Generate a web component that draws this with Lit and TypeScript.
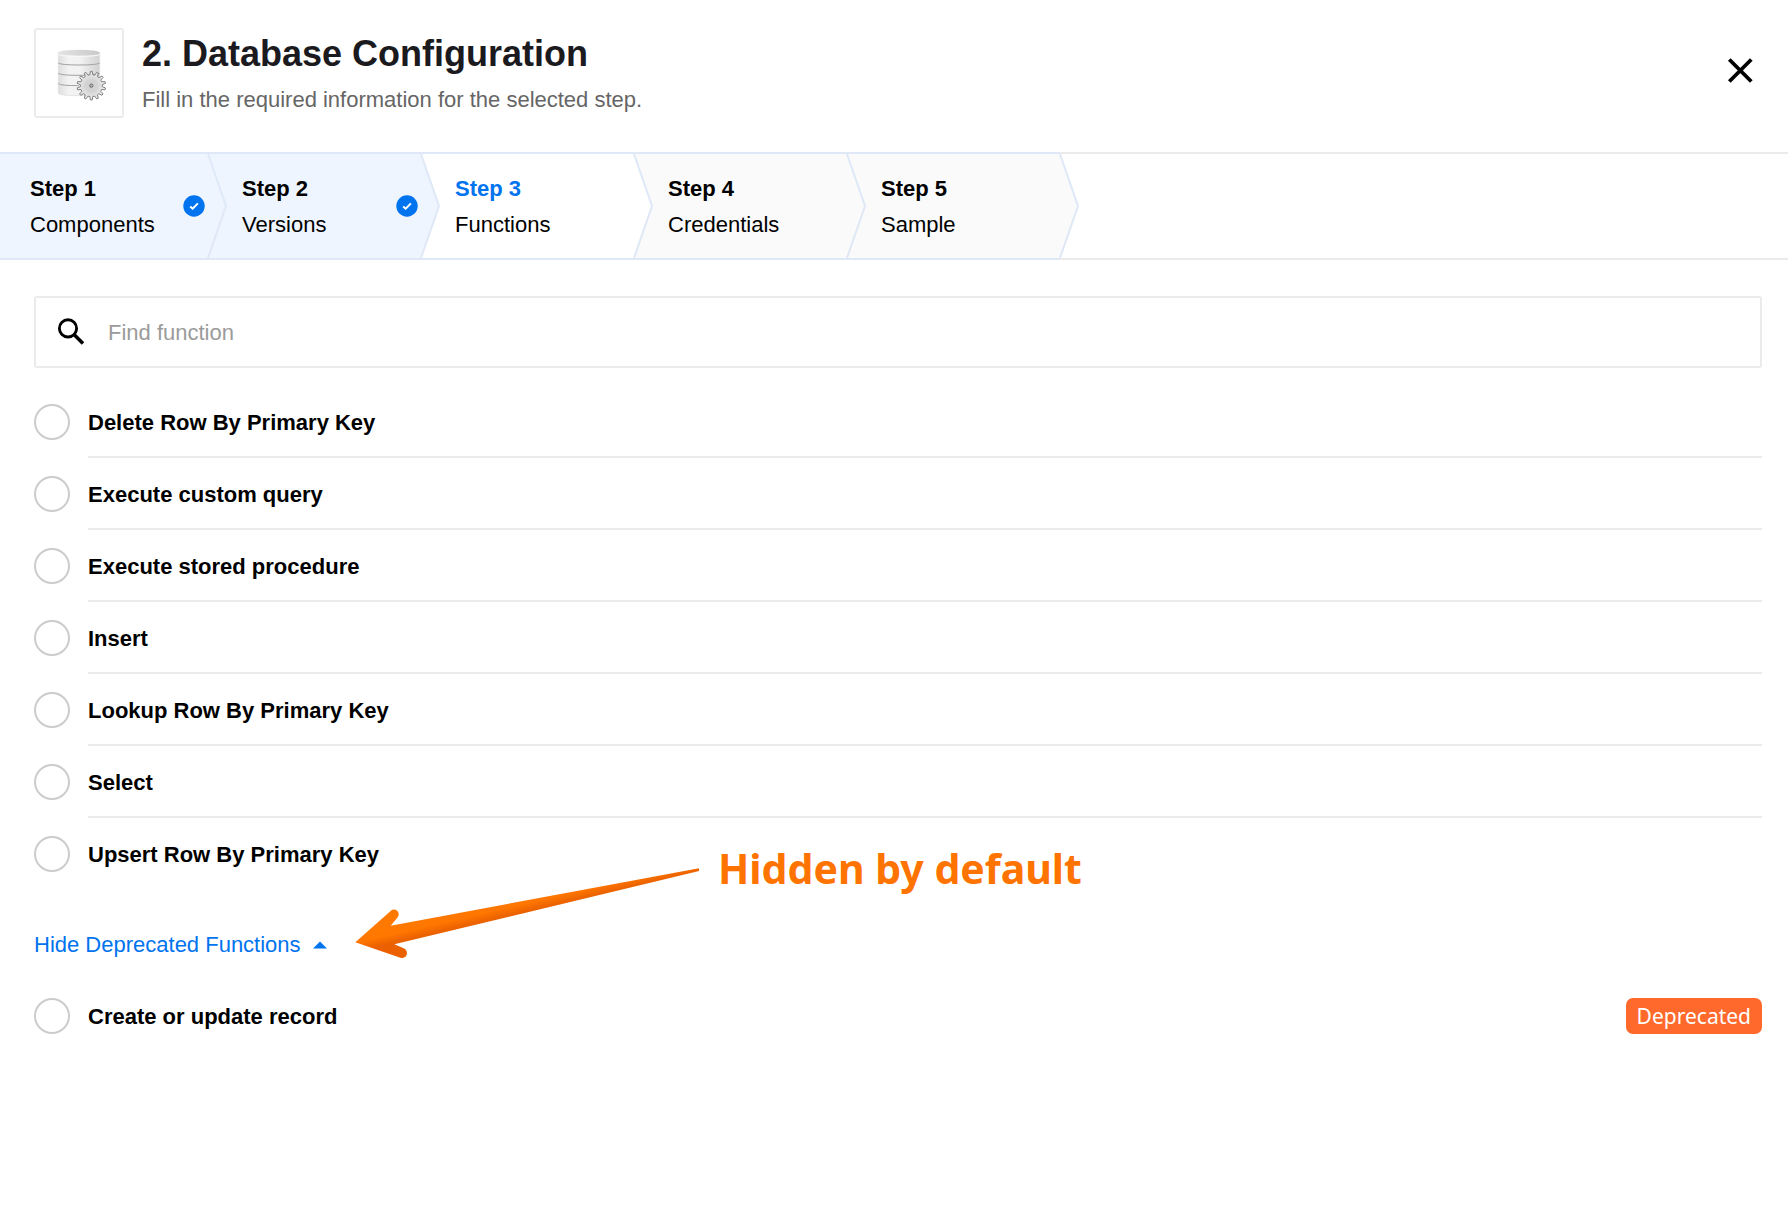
import { LitElement, html, css, svg, nothing } from "lit";
import { customElement, property, state } from "lit/decorators.js";
import { classMap } from "lit/directives/class-map.js";

type StepState = "done" | "current" | "pending";

interface Step {
  title: string;
  label: string;
  state: StepState;
}

interface Fn {
  id: string;
  name: string;
  deprecated?: boolean;
}

const STEPS: Step[] = [
  { title: "Step 1", label: "Components", state: "done" },
  { title: "Step 2", label: "Versions", state: "done" },
  { title: "Step 3", label: "Functions", state: "current" },
  { title: "Step 4", label: "Credentials", state: "pending" },
  { title: "Step 5", label: "Sample", state: "pending" },
];

const FUNCTIONS: Fn[] = [
  { id: "delete-row", name: "Delete Row By Primary Key" },
  { id: "custom-query", name: "Execute custom query" },
  { id: "stored-procedure", name: "Execute stored procedure" },
  { id: "insert", name: "Insert" },
  { id: "lookup-row", name: "Lookup Row By Primary Key" },
  { id: "select", name: "Select" },
  { id: "upsert-row", name: "Upsert Row By Primary Key" },
];

const DEPRECATED: Fn[] = [
  { id: "create-or-update", name: "Create or update record", deprecated: true },
];

/** Outline of a cog with the given number of teeth, centred on (cx, cy). */
function gearPath(cx: number, cy: number, outer: number, inner: number, teeth: number): string {
  const pitch = (Math.PI * 2) / teeth;
  const at = (r: number, a: number) =>
    `${(cx + r * Math.cos(a)).toFixed(1)} ${(cy + r * Math.sin(a)).toFixed(1)}`;
  let d = "";
  for (let i = 0; i < teeth; i++) {
    const a = i * pitch - Math.PI / 2;
    d += `${i === 0 ? "M" : "L"}${at(inner, a - pitch * 0.3)}`;
    d += `L${at(outer, a - pitch * 0.14)}L${at(outer, a + pitch * 0.14)}`;
    d += `L${at(inner, a + pitch * 0.3)}`;
  }
  return d + "Z";
}

const databaseIcon = html`
  <svg class="logo" viewBox="48 45 258 258" aria-hidden="true">
    <defs>
      <linearGradient id="drum" x1="0" x2="1" y1="0" y2="0">
        <stop offset="0" stop-color="#dedede" />
        <stop offset="0.25" stop-color="#f3f3f3" />
        <stop offset="0.55" stop-color="#f1f1f1" />
        <stop offset="0.75" stop-color="#e2e2e2" />
        <stop offset="1" stop-color="#d2d2d2" />
      </linearGradient>
      <linearGradient id="lid" x1="0" x2="1" y1="0" y2="0">
        <stop offset="0" stop-color="#e4e4e4" />
        <stop offset="1" stop-color="#c9c9c9" />
      </linearGradient>
      <radialGradient id="cog">
        <stop offset="0" stop-color="#cfcfcf" />
        <stop offset="0.6" stop-color="#dcdcdc" />
        <stop offset="1" stop-color="#f0f0f0" />
      </radialGradient>
    </defs>
    <path d="M115 113V234Q115 242 177 242T239 234V113Z" fill="url(#drum)" stroke="#dcdcdc" stroke-width="2" />
    <ellipse cx="177" cy="113" rx="62" ry="9" fill="url(#lid)" />
    <path d="M115 118Q120 124 177 124T239 118" fill="none" stroke="#fafafa" stroke-width="3" />
    <g fill="none" stroke="#a2a2a2" stroke-width="3">
      <path d="M115 144Q122 150 177 150T239 144" />
      <path d="M115 175Q122 181 177 181T239 175" />
      <path d="M115 206Q122 212 176 212" />
    </g>
    <path d=${gearPath(214, 212, 43, 33, 14)} fill="url(#cog)" stroke="#808080" stroke-width="3" stroke-linejoin="round" />
    <circle cx="214" cy="212" r="21" fill="#d2d2d2" opacity="0.7" />
    <circle cx="214" cy="212" r="5" fill="#b4b4b4" stroke="#6c6c6c" stroke-width="3" />
  </svg>
`;

const chevron = svg`
  <path class="chevron-fill" d="M0 0L18 52L0 104Z" />
  <path class="chevron-line" d="M0 0L18 52L0 104" />
`;

@customElement("wizard-steps")
export class WizardSteps extends LitElement {
  @property({ attribute: false }) steps: Step[] = [];

  static styles = css`
    :host {
      display: block;
    }
    .steps {
      display: flex;
      margin: 0;
      padding: 0;
      list-style: none;
      border-top: 2px solid #ebebeb;
      border-bottom: 2px solid #ebebeb;
    }
    .step {
      position: relative;
      flex: 0 0 213px;
      margin: -2px 0;
      border-top: 2px solid #dfe8f6;
      border-bottom: 2px solid #dfe8f6;
    }
    .step:first-child {
      flex-basis: 208px;
    }
    .step-button {
      display: flex;
      align-items: center;
      justify-content: space-between;
      width: 100%;
      height: 104px;
      padding: 0 3px 0 34px;
      border: 0;
      background: none;
      color: #000;
      font: inherit;
      text-align: left;
      cursor: pointer;
    }
    .step:first-child .step-button {
      padding-left: 30px;
    }
    .done {
      background: #eef5fe;
      --fill: #eef5fe;
    }
    .current {
      background: #fff;
      --fill: #fff;
    }
    .pending {
      background: #fafafa;
      --fill: #fafafa;
    }
    .text {
      display: flex;
      flex-direction: column;
      padding-top: 2px;
      line-height: 36px;
    }
    .title {
      font-weight: 700;
    }
    .current .title {
      color: #0073ef;
    }
    .chevron {
      position: absolute;
      z-index: 1;
      top: 0;
      left: 100%;
      width: 20px;
      height: 104px;
      overflow: visible;
      pointer-events: none;
    }
    .chevron-fill {
      fill: var(--fill);
    }
    .chevron-line {
      fill: none;
      stroke: #dfe8f6;
      stroke-width: 2;
    }
    .check {
      flex: none;
      width: 22px;
      height: 22px;
    }
  `;

  render() {
    return html`
      <ol class="steps">
        ${this.steps.map(
          (s) => html`
            <li class=${classMap({ step: true, [s.state]: true })}>
              <button class="step-button" type="button" aria-current=${s.state === "current" ? "step" : nothing}>
                <span class="text">
                  <span class="title">${s.title}</span>
                  <span>${s.label}</span>
                </span>
                ${s.state === "done"
                  ? html`<svg class="check" viewBox="0 0 22 22" aria-hidden="true">
                      <circle cx="11" cy="11" r="10.7" fill="#0073ef" />
                      <path d="M7.2 11.4L9.7 13.7L14.9 8.4" fill="none" stroke="#fff" stroke-width="2" />
                    </svg>`
                  : nothing}
              </button>
              <svg class="chevron" viewBox="0 0 20 104" aria-hidden="true">${chevron}</svg>
            </li>
          `,
        )}
      </ol>
    `;
  }
}

@customElement("function-option")
export class FunctionOption extends LitElement {
  @property({ attribute: false }) fn!: Fn;
  @property({ type: Boolean }) checked = false;
  @property({ type: Boolean }) divided = false;

  static styles = css`
    :host {
      display: block;
    }
    .row {
      display: flex;
      align-items: stretch;
      gap: 18px;
      height: 72px;
      cursor: pointer;
    }
    .radio {
      appearance: none;
      flex: none;
      align-self: center;
      box-sizing: border-box;
      width: 36px;
      height: 36px;
      margin: 0;
      border: 2px solid #ccc;
      border-radius: 50%;
      background: #fff;
      cursor: pointer;
    }
    .radio:checked {
      border: 10px solid #0073ef;
    }
    .body {
      display: flex;
      flex: 1;
      align-items: center;
      justify-content: space-between;
    }
    .divided {
      box-shadow: inset 0 -2px #ebebeb;
    }
    .name {
      padding-top: 2px;
      font-weight: 700;
    }
    .badge {
      padding: 0 11px;
      border-radius: 7px;
      background: #ff6a2c;
      color: #fff;
      font-family: "Noto Sans", sans-serif;
      font-size: 21px;
      line-height: 36px;
    }
  `;

  private pick() {
    this.dispatchEvent(new CustomEvent("pick", { detail: this.fn.id }));
  }

  render() {
    return html`
      <label class="row">
        <input
          class="radio"
          type="radio"
          name="function"
          .value=${this.fn.id}
          .checked=${this.checked}
          @change=${this.pick}
        />
        <span class=${classMap({ body: true, divided: this.divided })}>
          <span class="name">${this.fn.name}</span>
          ${this.fn.deprecated ? html`<span class="badge">Deprecated</span>` : nothing}
        </span>
      </label>
    `;
  }
}

@customElement("app-root")
export class AppRoot extends LitElement {
  @state() private query = "";
  @state() private selected = "";
  @state() private showDeprecated = true;

  static styles = css`
    :host {
      display: block;
      min-height: 100vh;
      background: #fff;
      color: #000;
      font-family: "Liberation Sans", Arial, sans-serif;
      font-size: 22px;
      line-height: 26px;
    }
    .header {
      display: flex;
      align-items: flex-start;
      gap: 18px;
      padding: 28px 28px 34px 34px;
    }
    .logo-box {
      flex: none;
      box-sizing: border-box;
      width: 90px;
      height: 90px;
      border: 2px solid #ebebeb;
      border-radius: 3px;
    }
    .logo {
      display: block;
      width: 100%;
      height: 100%;
    }
    .heading {
      flex: 1;
      padding-top: 5px;
    }
    h1 {
      margin: 0;
      color: #1b1b1f;
      font-size: 36px;
      line-height: 42px;
    }
    .subtitle {
      margin: 12px 0 0;
      color: #666;
    }
    .close {
      display: grid;
      place-items: center;
      width: 40px;
      height: 40px;
      margin-top: 22px;
      padding: 0;
      border: 0;
      background: none;
      cursor: pointer;
    }
    .close svg {
      width: 28px;
      height: 28px;
    }
    .content {
      padding: 36px 26px 36px 34px;
    }
    .search {
      display: flex;
      align-items: center;
      gap: 20px;
      box-sizing: border-box;
      height: 72px;
      margin-bottom: 18px;
      padding: 0 20px;
      border: 2px solid #ebebeb;
      border-radius: 3px;
    }
    .search svg {
      flex: none;
      width: 32px;
      height: 32px;
    }
    .search input {
      flex: 1;
      min-width: 0;
      height: 64px;
      padding: 2px 0 0;
      border: 0;
      outline: 0;
      background: none;
      color: #000;
      font: inherit;
    }
    .search input::placeholder {
      color: #9b9b9b;
      opacity: 1;
    }
    .toggle-row {
      position: relative;
      padding: 42px 0 22px;
    }
    .toggle {
      display: flex;
      align-items: center;
      gap: 12px;
      padding: 0;
      border: 0;
      background: none;
      color: #0073ef;
      font: inherit;
      cursor: pointer;
    }
    .caret {
      width: 14px;
      height: 8px;
    }
    .caret.closed {
      transform: rotate(180deg);
    }
    .note {
      position: absolute;
      top: -40px;
      left: 306px;
      display: flex;
      gap: 8px;
      pointer-events: none;
    }
    .arrow {
      width: 370px;
      height: 120px;
    }
    .note-text {
      margin: 0;
      color: #ff7300;
      font-family: "Noto Sans", sans-serif;
      font-size: 41px;
      font-weight: 700;
      line-height: 36px;
      white-space: nowrap;
    }
  `;

  private matches(list: Fn[]) {
    const q = this.query.trim().toLowerCase();
    return list.filter((f) => f.name.toLowerCase().includes(q));
  }

  private options(list: Fn[]) {
    return list.map(
      (f, i) => html`
        <function-option
          .fn=${f}
          .checked=${this.selected === f.id}
          .divided=${i < list.length - 1}
          @pick=${(e: CustomEvent<string>) => (this.selected = e.detail)}
        ></function-option>
      `,
    );
  }

  render() {
    return html`
      <header class="header">
        <div class="logo-box">${databaseIcon}</div>
        <div class="heading">
          <h1>2. Database Configuration</h1>
          <p class="subtitle">Fill in the required information for the selected step.</p>
        </div>
        <button class="close" type="button" aria-label="Close">
          <svg viewBox="0 0 28 28" aria-hidden="true">
            <path d="M3.3 3.5L25.3 25.5M25.3 3.5L3.3 25.5" fill="none" stroke="#000" stroke-width="3.8" />
          </svg>
        </button>
      </header>

      <wizard-steps .steps=${STEPS}></wizard-steps>

      <main class="content">
        <label class="search">
          <svg viewBox="0 0 32 32" aria-hidden="true">
            <circle cx="12" cy="12.4" r="8.6" fill="none" stroke="#000" stroke-width="2.9" />
            <path d="M18 18.4L27 27.4" fill="none" stroke="#000" stroke-width="3.6" />
          </svg>
          <input
            type="text"
            placeholder="Find function"
            aria-label="Find function"
            .value=${this.query}
            @input=${(e: Event) => (this.query = (e.target as HTMLInputElement).value)}
          />
        </label>

        <div role="radiogroup" aria-label="Functions">${this.options(this.matches(FUNCTIONS))}</div>

        <div class="toggle-row">
          <button
            class="toggle"
            type="button"
            aria-expanded=${this.showDeprecated ? "true" : "false"}
            @click=${() => (this.showDeprecated = !this.showDeprecated)}
          >
            ${this.showDeprecated ? "Hide" : "Show"} Deprecated Functions
            <svg class=${classMap({ caret: true, closed: !this.showDeprecated })} viewBox="0 0 14 8" aria-hidden="true">
              <path d="M0 7.5L7 0.5L14 7.5Z" fill="#0073ef" />
            </svg>
          </button>
          <div class="note">
            <svg class="arrow" viewBox="0 0 1110 360" aria-hidden="true">
              <defs>
                <linearGradient id="shade" gradientUnits="userSpaceOnUse" x1="300" y1="205" x2="311" y2="252">
                  <stop offset="0" stop-color="#ff7800" />
                  <stop offset="0.3" stop-color="#ff7600" />
                  <stop offset="0.8" stop-color="#eb6200" />
                  <stop offset="1" stop-color="#eb6000" />
                </linearGradient>
              </defs>
              <path
                d="M46 277L152 183A14 14 0 0 1 172 203L152 227L1077 55V63L163 283L191 295A14 14 0 0 1 181 323Z"
                fill="url(#shade)"
              />
            </svg>
            <p class="note-text">Hidden by default</p>
          </div>
        </div>

        ${this.showDeprecated
          ? html`<div role="radiogroup" aria-label="Deprecated functions">
              ${this.options(this.matches(DEPRECATED))}
            </div>`
          : nothing}
      </main>
    `;
  }
}
